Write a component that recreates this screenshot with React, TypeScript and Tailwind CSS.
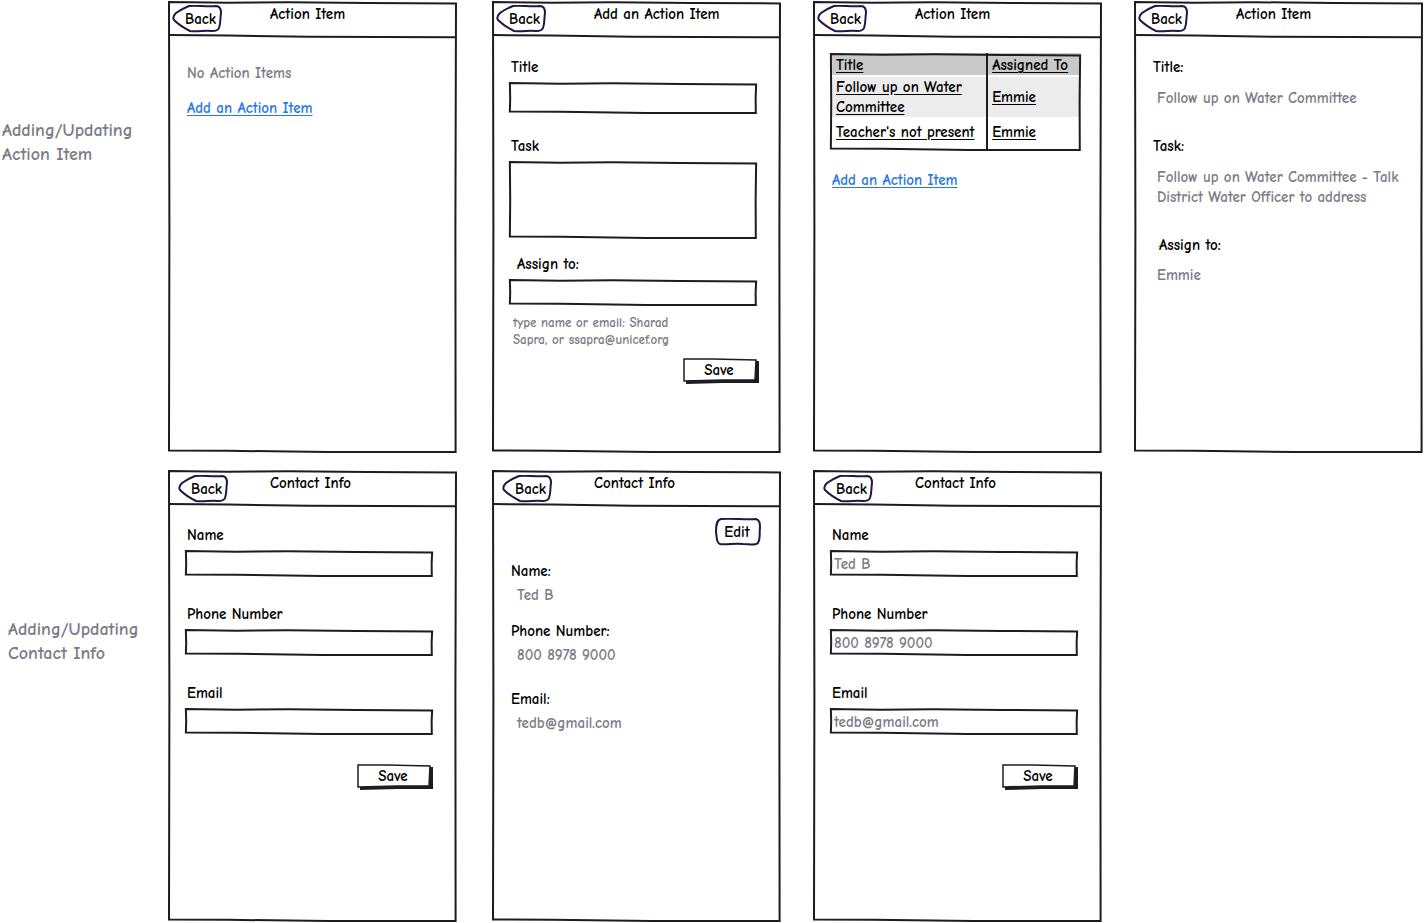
import React, { useId } from "react";

const INK = "#1c1c22";

/* Hand-drawn rectangle stretched over its positioned parent; tall is the box height in pixels. */
function PenFrame({ tall }: { tall: number }) {
  return (
    <svg
      aria-hidden="true"
      className="pointer-events-none absolute inset-0 h-full w-full overflow-visible"
      viewBox={`0 0 289 ${tall}`}
      preserveAspectRatio="none"
      fill="none"
      stroke={INK}
      strokeWidth="2"
      strokeLinecap="square"
    >
      <path
        vectorEffect="non-scaling-stroke"
        d={`M1 1L60 1.7L120 1.2L200 2L288 2.4L287.4 ${tall / 2}L287.6 ${tall - 1}L160 ${tall - 1}L60 ${tall - 2.2}L1 ${tall - 2.6}L1.4 ${tall / 2}Z`}
      />
    </svg>
  );
}

function BackButton() {
  return (
    <button type="button" className="relative block h-7 w-[50px] pl-[13px] text-left leading-5">
      <svg
        aria-hidden="true"
        className="absolute inset-0"
        width="50"
        height="28"
        viewBox="0 0 50 28"
        fill="none"
        stroke="#241640"
        strokeWidth="2"
        strokeLinejoin="round"
      >
        <path d="M17 1C25 0 34 2 44 1C48 1 49 4 49 8C48 13 49 18 47 23C46 26 43 26 40 26C33 25 26 27 18 26C12 23 6 19 2 15C0 12 2 10 4 8C8 5 12 3 17 1Z" />
      </svg>
      <span className="relative">Back</span>
    </button>
  );
}

type ScreenProps = { title: string; inset?: boolean; children: React.ReactNode };

function Screen({ title, inset = false, children }: ScreenProps) {
  return (
    <section className="relative min-h-[452px] min-w-0 flex-1">
      <PenFrame tall={452} />
      <header className="relative flex h-[37px] items-start">
        <svg
          aria-hidden="true"
          className="pointer-events-none absolute inset-0 h-full w-full overflow-visible"
          viewBox="0 0 289 37"
          preserveAspectRatio="none"
          fill="none"
          stroke={INK}
          strokeWidth="2"
        >
          <path vectorEffect="non-scaling-stroke" d="M1 34L60 34.5L140 35.8L288 36.2" />
        </svg>
        <div className={inset ? "w-[102px] pt-[5px] pl-2.5" : "w-[102px] pt-1 pl-1"}>
          <BackButton />
        </div>
        <h2 className="pt-[3px] leading-5">{title}</h2>
      </header>
      <div className="relative">{children}</div>
    </section>
  );
}

type FieldProps = {
  label: string;
  value?: string;
  tall?: boolean;
  multiline?: boolean;
  nudge?: boolean;
};

function Field({ label, value = "", tall = false, multiline = false, nudge = false }: FieldProps) {
  const id = useId();
  return (
    <div className="flex flex-col gap-[5px]">
      <label htmlFor={id} className={nudge ? "pl-1.5 leading-5" : "leading-5"}>
        {label}
      </label>
      <div className="relative -ml-0.5">
        <PenFrame tall={multiline ? 78 : tall ? 32 : 27} />
        {multiline ? (
          <textarea id={id} className="relative block h-[78px] w-full resize-none bg-transparent px-1 outline-none" />
        ) : (
          <input
            id={id}
            defaultValue={value}
            className={
              "relative block w-full bg-transparent px-1 text-[#7e7c88] outline-none " +
              (tall ? "h-8" : "h-[27px]")
            }
          />
        )}
      </div>
    </div>
  );
}

function SaveButton() {
  return (
    <button type="submit" className="relative h-[26px] w-[76px] pr-1 pb-0.5 leading-5">
      <svg aria-hidden="true" className="absolute inset-0" width="76" height="26" viewBox="0 0 76 26">
        <path d="M3 5L76 3L76 25L40 25L3 26Z" fill={INK} />
        <path d="M1 1L30 1L73 2L72 22L40 22L1 23Z" fill="#fff" stroke={INK} strokeWidth="1.5" />
      </svg>
      <span className="relative">Save</span>
    </button>
  );
}

type DetailProps = { term: string; value: string; gap?: string; nudge?: boolean; indent?: string };

function Detail({ term, value, gap = "gap-1", nudge = false, indent = "pl-1.5" }: DetailProps) {
  return (
    <div className={"flex flex-col " + gap}>
      <dt className={"leading-5 " + (nudge ? "pl-1.5" : "")}>{term}</dt>
      <dd className={"leading-5 text-[#7e7c88] " + indent}>{value}</dd>
    </div>
  );
}

function ActionLink() {
  return (
    <a href="#add" className="self-start leading-5 text-[#2b78e4] underline underline-offset-2">
      Add an Action Item
    </a>
  );
}

const items = [
  { title: "Follow up on Water Committee", who: "Emmie" },
  { title: "Teacher's not present", who: "Emmie" },
];

function ItemTable() {
  return (
    <div className="relative -ml-0.5">
      <table className="w-full table-fixed border-separate border-spacing-0 text-left underline underline-offset-2">
        <colgroup>
          <col className="w-[63%]" />
          <col />
        </colgroup>
        <thead>
          <tr className="h-6">
            <th className="border-r-2 border-[#1c1c22] p-0 pb-0.5">
              <div className="bg-[#c9c9c9] pt-0.5 pl-1.5 leading-5">Title</div>
            </th>
            <th className="p-0 pb-0.5">
              <div className="bg-[#c9c9c9] pt-0.5 pl-1 leading-5">Assigned To</div>
            </th>
          </tr>
        </thead>
        <tbody>
          {items.map((item, i) => (
            <tr key={item.title} className={i === 0 ? "h-10 bg-[#ececec]" : "h-[34px]"}>
              <td className={"border-r-2 border-[#1c1c22] pt-0 pl-1.5 leading-5 " + (i === 0 ? "" : "pb-1")}>
                {item.title}
              </td>
              <td className={"pt-0 pl-1 leading-5 " + (i === 0 ? "" : "pb-1")}>{item.who}</td>
            </tr>
          ))}
        </tbody>
      </table>
      <PenFrame tall={98} />
    </div>
  );
}

function ContactForm({ name, phone, email }: { name?: string; phone?: string; email?: string }) {
  return (
    <form className="flex flex-col pt-[18px] pr-6 pl-[19px]" onSubmit={(e) => e.preventDefault()}>
      <div className="flex flex-col gap-[27px]">
        <Field label="Name" value={name} />
        <Field label="Phone Number" value={phone} />
        <Field label="Email" value={email} />
      </div>
      <div className="flex justify-end pt-[29px]">
        <SaveButton />
      </div>
    </form>
  );
}

export default function App() {
  return (
    <main className="flex flex-col gap-[17px] bg-white pt-px pr-px font-['Comic_Neue','Comic_Sans_MS',Inter,sans-serif] text-[15px] font-bold text-black">
      <div className="flex">
        <h1 className="w-[168px] shrink-0 pt-[118px] pl-0.5 text-lg leading-6 text-[#7e7c88]">
          Adding/Updating
          <br />
          Action Item
        </h1>
        <div className="flex min-w-0 flex-1 gap-8">
          <Screen title="Action Item">
            <div className="flex flex-col gap-[15px] pt-[25px] pl-[19px]">
              <p className="leading-5 text-[#7e7c88]">No Action Items</p>
              <ActionLink />
            </div>
          </Screen>
          <div className="ml-[3px] flex min-w-0 flex-1">
            <Screen title="Add an Action Item">
              <form className="flex flex-col pt-[19px] pr-6 pl-[19px]" onSubmit={(e) => e.preventDefault()}>
                <div className="flex flex-col gap-[22px]">
                  <Field label="Title" tall />
                  <Field label="Task" multiline />
                </div>
                <div className="pt-[15px]">
                  <Field label="Assign to:" nudge />
                </div>
                <p className="max-w-[180px] pt-2 pl-0.5 text-[13px] leading-[17px] text-[#7e7c88]">
                  type name or email: Sharad Sapra, or ssapra@unicef.org
                </p>
                <div className="-mr-0.5 flex justify-end pt-2.5">
                  <SaveButton />
                </div>
              </form>
            </Screen>
          </div>
          <Screen title="Action Item">
            <div className="flex flex-col gap-[19px] pt-[15px] pr-[21px] pl-[19px]">
              <ItemTable />
              <ActionLink />
            </div>
          </Screen>
          <Screen title="Action Item">
            <dl className="flex flex-col gap-7 pt-[19px] pr-4 pl-[19px]">
              <Detail term="Title:" value="Follow up on Water Committee" gap="gap-[11px]" indent="pl-1" />
              <Detail
                term="Task:"
                value="Follow up on Water Committee - Talk District Water Officer to address"
                gap="gap-[11px]"
                indent="pl-1"
              />
              <Detail term="Assign to:" value="Emmie" gap="gap-2.5" indent="pl-1" nudge />
            </dl>
          </Screen>
        </div>
      </div>
      <div className="flex">
        <h1 className="w-[168px] shrink-0 pt-[148px] pl-2 text-lg leading-6 text-[#7e7c88]">
          Adding/Updating
          <br />
          Contact Info
        </h1>
        <div className="flex min-w-0 flex-1 gap-8">
          <Screen title="Contact Info" inset>
            <ContactForm />
          </Screen>
          <div className="ml-[3px] flex min-w-0 flex-1">
            <Screen title="Contact Info" inset>
              <div className="flex flex-col pt-[11px] pr-5 pl-[19px]">
                <button type="button" className="relative h-7 w-[46px] self-end pr-0.5 leading-5">
                  <svg
                    aria-hidden="true"
                    className="absolute inset-0"
                    width="46"
                    height="28"
                    viewBox="0 0 46 28"
                    fill="none"
                    stroke="#241640"
                    strokeWidth="2"
                  >
                    <path d="M6 1C18 0 30 2 41 1C45 2 45 6 45 10C44 15 46 20 43 25C40 28 34 26 28 26C20 25 12 27 5 26C1 25 2 19 1 14C1 9 1 2 6 1Z" />
                  </svg>
                  <span className="relative">Edit</span>
                </button>
                <dl className="flex flex-col pt-[15px]">
                  <Detail term="Name:" value="Ted B" />
                  <div className="pt-4 pb-6">
                    <Detail term="Phone Number:" value="800 8978 9000" />
                  </div>
                  <Detail term="Email:" value="tedb@gmail.com" />
                </dl>
              </div>
            </Screen>
          </div>
          <Screen title="Contact Info" inset>
            <ContactForm name="Ted B" phone="800 8978 9000" email="tedb@gmail.com" />
          </Screen>
          <div className="flex-1" />
        </div>
      </div>
    </main>
  );
}
